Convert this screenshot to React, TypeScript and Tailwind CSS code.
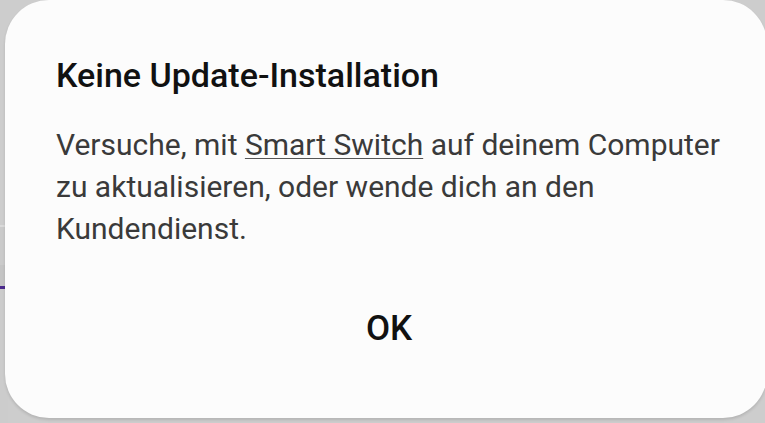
import React from "react";

const SideStrip = () => {
    return (
        <div className="absolute left-0 top-0 h-full w-[8px] flex flex-col bg-[#cbcbcb]">
            <div className="h-[225px] bg-[#cdcdcd]" />
            <div className="h-[2px] bg-[#dadada]" />
            <div className="h-[38px] bg-[#cacaca]" />
            <div className="h-[21px] bg-[#c4c4c4]" />
            <div className="h-[3px] bg-[#4b2a8c]" />
            <div className="flex-1 bg-[#cccccc]" />
        </div>
    );
};

export default function App() {
    return (
        <div
            className="relative w-[765px] h-[423px] overflow-hidden bg-[#cdcdcd]"
            style={{ fontFamily: "Roboto, 'Noto Sans', sans-serif" }}
        >
            <SideStrip />
            <div className="relative ml-[5px] w-[762px] h-[418px] rounded-[44px] bg-[#fcfcfc] shadow-[0_2px_3px_rgba(0,0,0,0.12)] flex flex-col pl-[51px] pr-[10px]">
                <h1 className="mt-[55px] text-[34px] leading-[40px] font-medium text-[#111111]">
                    Keine Update-Installation
                </h1>
                <p className="mt-[29px] text-[30px] leading-[42px] text-[#3a3a3a]">
                    Versuche, mit{" "}
                    <span className="underline decoration-[#555555] decoration-1 underline-offset-[3px]">
                        Smart Switch
                    </span>{" "}
                    auf deinem Computer
                    <br />
                    zu aktualisieren, oder wende dich an den
                    <br />
                    Kundendienst.
                </p>
                <div className="mt-[59px] flex justify-center pr-[35px]">
                    <button className="text-[35px] leading-[40px] font-medium text-[#111111]">
                        OK
                    </button>
                </div>
            </div>
        </div>
    );
}
